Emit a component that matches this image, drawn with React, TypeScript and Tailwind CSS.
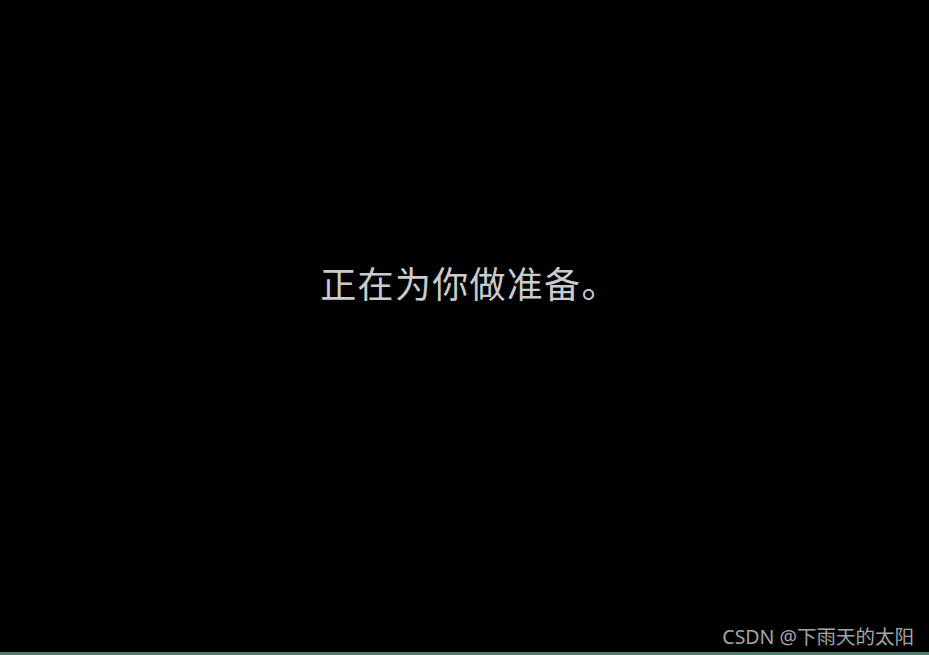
export default function App() {
  return (
    <div className="relative flex h-[655px] w-[929px] flex-col bg-black">
      <div className="flex h-[652px] flex-col">
        <div className="flex flex-1 items-center justify-center pb-[88px]">
          <p
            className="pl-[10px] text-[36px] leading-none tracking-[1.3px] text-[#cbcbcb]"
            style={{ fontFamily: '"Noto Sans CJK SC", "Noto Sans", sans-serif' }}
          >
            正在为你做准备。
          </p>
        </div>
      </div>
      <div className="h-[3px] bg-[#4f7f74]" />
      <span
        className="absolute bottom-[9px] right-[15px] text-[19.5px] leading-none text-[#a5a5a5]"
        style={{ fontFamily: '"Noto Sans", "Noto Sans CJK SC", sans-serif' }}
      >
        CSDN @下雨天的太阳
      </span>
    </div>
  );
}
